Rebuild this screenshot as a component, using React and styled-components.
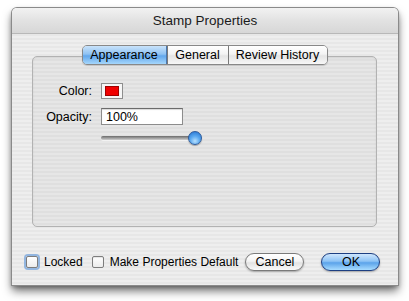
import styled, { createGlobalStyle } from 'styled-components'

const Global = createGlobalStyle`
	body {
		margin: 0;
		background: #ffffff;
		font-family: "Liberation Sans", "DejaVu Sans", sans-serif;
		font-size: 12px;
		color: #000;
	}
`

const stripes = `repeating-linear-gradient(180deg, #eeeeee 0px, #eeeeee 2px, #e7e7e7 2px, #e7e7e7 4px)`

const Page = styled.div`
	width: 409px;
	height: 301px;
	padding: 8px 0 0 12px;
	box-sizing: border-box;
	overflow: hidden;
`

const Window = styled.div`
	width: 386px;
	height: 277px;
	display: flex;
	flex-direction: column;
	background: ${stripes};
	border-radius: 5px 5px 0 0;
	box-shadow: 0 0 0 1px #8a8a8a, 0 6px 10px rgba(0, 0, 0, 0.55), 0 2px 4px rgba(0, 0, 0, 0.3);
`

const TitleBar = styled.div`
	height: 25px;
	display: flex;
	align-items: center;
	justify-content: center;
	font-size: 13.5px;
	color: #1a1a1a;
	border-radius: 5px 5px 0 0;
	background: linear-gradient(180deg, #f2f2f2 0%, #e2e2e2 50%, #d7d7d7 100%);
	border-bottom: 1px solid #b8b8b8;
`

const Body = styled.div`
	flex: 1;
	display: flex;
	flex-direction: column;
	padding: 11px 21px 0 20px;
`

const TabBar = styled.div`
	align-self: center;
	display: flex;
	height: 18px;
	margin-bottom: -9px;
	position: relative;
	z-index: 1;
	border: 1px solid #888;
	border-radius: 5px;
	overflow: hidden;
	box-shadow: 0 1px 1px rgba(0, 0, 0, 0.15);
`

const Tab = styled.div`
	display: flex;
	align-items: center;
	justify-content: center;
	width: ${(p) => p.w}px;
	font-size: 12.5px;
	white-space: nowrap;
	border-left: ${(p) => (p.first ? 'none' : '1px solid #7a7a7a')};
	background: ${(p) =>
		p.active
			? 'linear-gradient(180deg, #c9e3fb 0%, #8fc2f2 45%, #62a7ec 55%, #a5d6fb 100%)'
			: 'linear-gradient(180deg, #ffffff 0%, #f3f3f3 45%, #e4e4e4 55%, #f7f7f7 100%)'};
	${(p) => p.active && 'border-right: 1px solid #4a78b0;'}
`

const Group = styled.div`
	height: 171px;
	box-sizing: border-box;
	border: 1px solid #b2b2b2;
	border-radius: 5px;
	background: repeating-linear-gradient(180deg, #e6e6e6 0px, #e6e6e6 2px, #dfdfdf 2px, #dfdfdf 4px);
	box-shadow: inset 0 1px 2px rgba(0, 0, 0, 0.08);
	padding-top: 26px;
`

const Form = styled.div`
	display: grid;
	grid-template-columns: 59px auto;
	column-gap: 9px;
	row-gap: 9px;
	align-items: center;
	justify-items: start;
`

const Label = styled.div`
	justify-self: end;
	font-size: 12.5px;
`

const Swatch = styled.div`
	width: 22px;
	height: 16px;
	box-sizing: border-box;
	padding: 2px 3px;
	background: #f6f6f6;
	border: 1px solid #8e8e8e;
	div {
		width: 100%;
		height: 100%;
		background: #f00000;
		box-shadow: inset 0 0 0 1px #a00000;
	}
`

const Field = styled.div`
	width: 82px;
	height: 17px;
	box-sizing: border-box;
	padding: 1px 4px;
	background: #fff;
	border: 1px solid #8c8c8c;
	border-top-color: #6c6c6c;
	box-shadow: inset 0 1px 1px rgba(0, 0, 0, 0.15);
	font-size: 12.5px;
	line-height: 14px;
`

const Slider = styled.div`
	grid-column: 2;
	width: 101px;
	height: 15px;
	display: flex;
	align-items: center;
	margin-top: -4px;
`

const Track = styled.div`
	flex: 1;
	height: 4px;
	border-radius: 3px;
	background: linear-gradient(180deg, #6a6a6a 0%, #9c9c9c 50%, #cfcfcf 100%);
	box-shadow: 0 1px 0 rgba(255, 255, 255, 0.6);
`

const Knob = styled.div`
	width: 14px;
	height: 14px;
	margin-left: -7px;
	border-radius: 50%;
	border: 1px solid #2d5b9c;
	box-sizing: border-box;
	background: radial-gradient(circle at 50% 75%, #b6e0ff 0%, #5aa8ef 45%, #1f6fd0 100%);
	box-shadow: 0 1px 1px rgba(0, 0, 0, 0.3);
`

const Footer = styled.div`
	display: flex;
	align-items: center;
	padding: 26px 0 0 0;
	margin-left: -6px;
	white-space: nowrap;
`

const Check = styled.label`
	display: flex;
	align-items: center;
	flex-shrink: 0;
	gap: 6px;
	margin-right: ${(p) => p.mr}px;
	font-size: 12px;
`

const Box = styled.span`
	width: 12px;
	height: 12px;
	box-sizing: border-box;
	border: 1px solid #7d7d7d;
	border-radius: 2px;
	background: linear-gradient(180deg, #ffffff 0%, #ececec 100%);
	box-shadow: ${(p) => (p.focus ? '0 0 0 2px rgba(110, 160, 220, 0.7)' : 'inset 0 1px 1px rgba(0,0,0,0.1)')};
`

const Button = styled.div`
	width: ${(p) => p.w}px;
	height: 18px;
	flex-shrink: 0;
	box-sizing: border-box;
	display: flex;
	align-items: center;
	justify-content: center;
	border-radius: 9px;
	font-size: 12.5px;
	margin-left: ${(p) => p.ml}px;
	border: 1px solid ${(p) => (p.primary ? '#1d3f82' : '#7a7a7a')};
	background: ${(p) =>
		p.primary
			? 'linear-gradient(180deg, #cfe6fd 0%, #8dc3f5 45%, #5ba3ea 55%, #a8dcff 100%)'
			: 'linear-gradient(180deg, #ffffff 0%, #f4f4f4 45%, #e3e3e3 55%, #fafafa 100%)'};
	box-shadow: 0 1px 2px rgba(0, 0, 0, 0.3);
`

const App = () => {
	return (
		<>
			<Global />
			<Page>
				<Window>
					<TitleBar>Stamp Properties</TitleBar>
					<Body>
						<TabBar>
							<Tab first active w={83}>Appearance</Tab>
							<Tab w={60}>General</Tab>
							<Tab w={98}>Review History</Tab>
						</TabBar>
						<Group>
							<Form>
								<Label>Color:</Label>
								<Swatch><div /></Swatch>
								<Label>Opacity:</Label>
								<Field>100%</Field>
								<Slider>
									<Track />
									<Knob />
								</Slider>
							</Form>
						</Group>
						<Footer>
							<Check mr={9}><Box focus />Locked</Check>
							<Check mr={0}><Box />Make Properties Default</Check>
							<Button w={59} ml={7}>Cancel</Button>
							<Button primary w={59} ml={17}>OK</Button>
						</Footer>
					</Body>
				</Window>
			</Page>
		</>
	)
}

export default App
